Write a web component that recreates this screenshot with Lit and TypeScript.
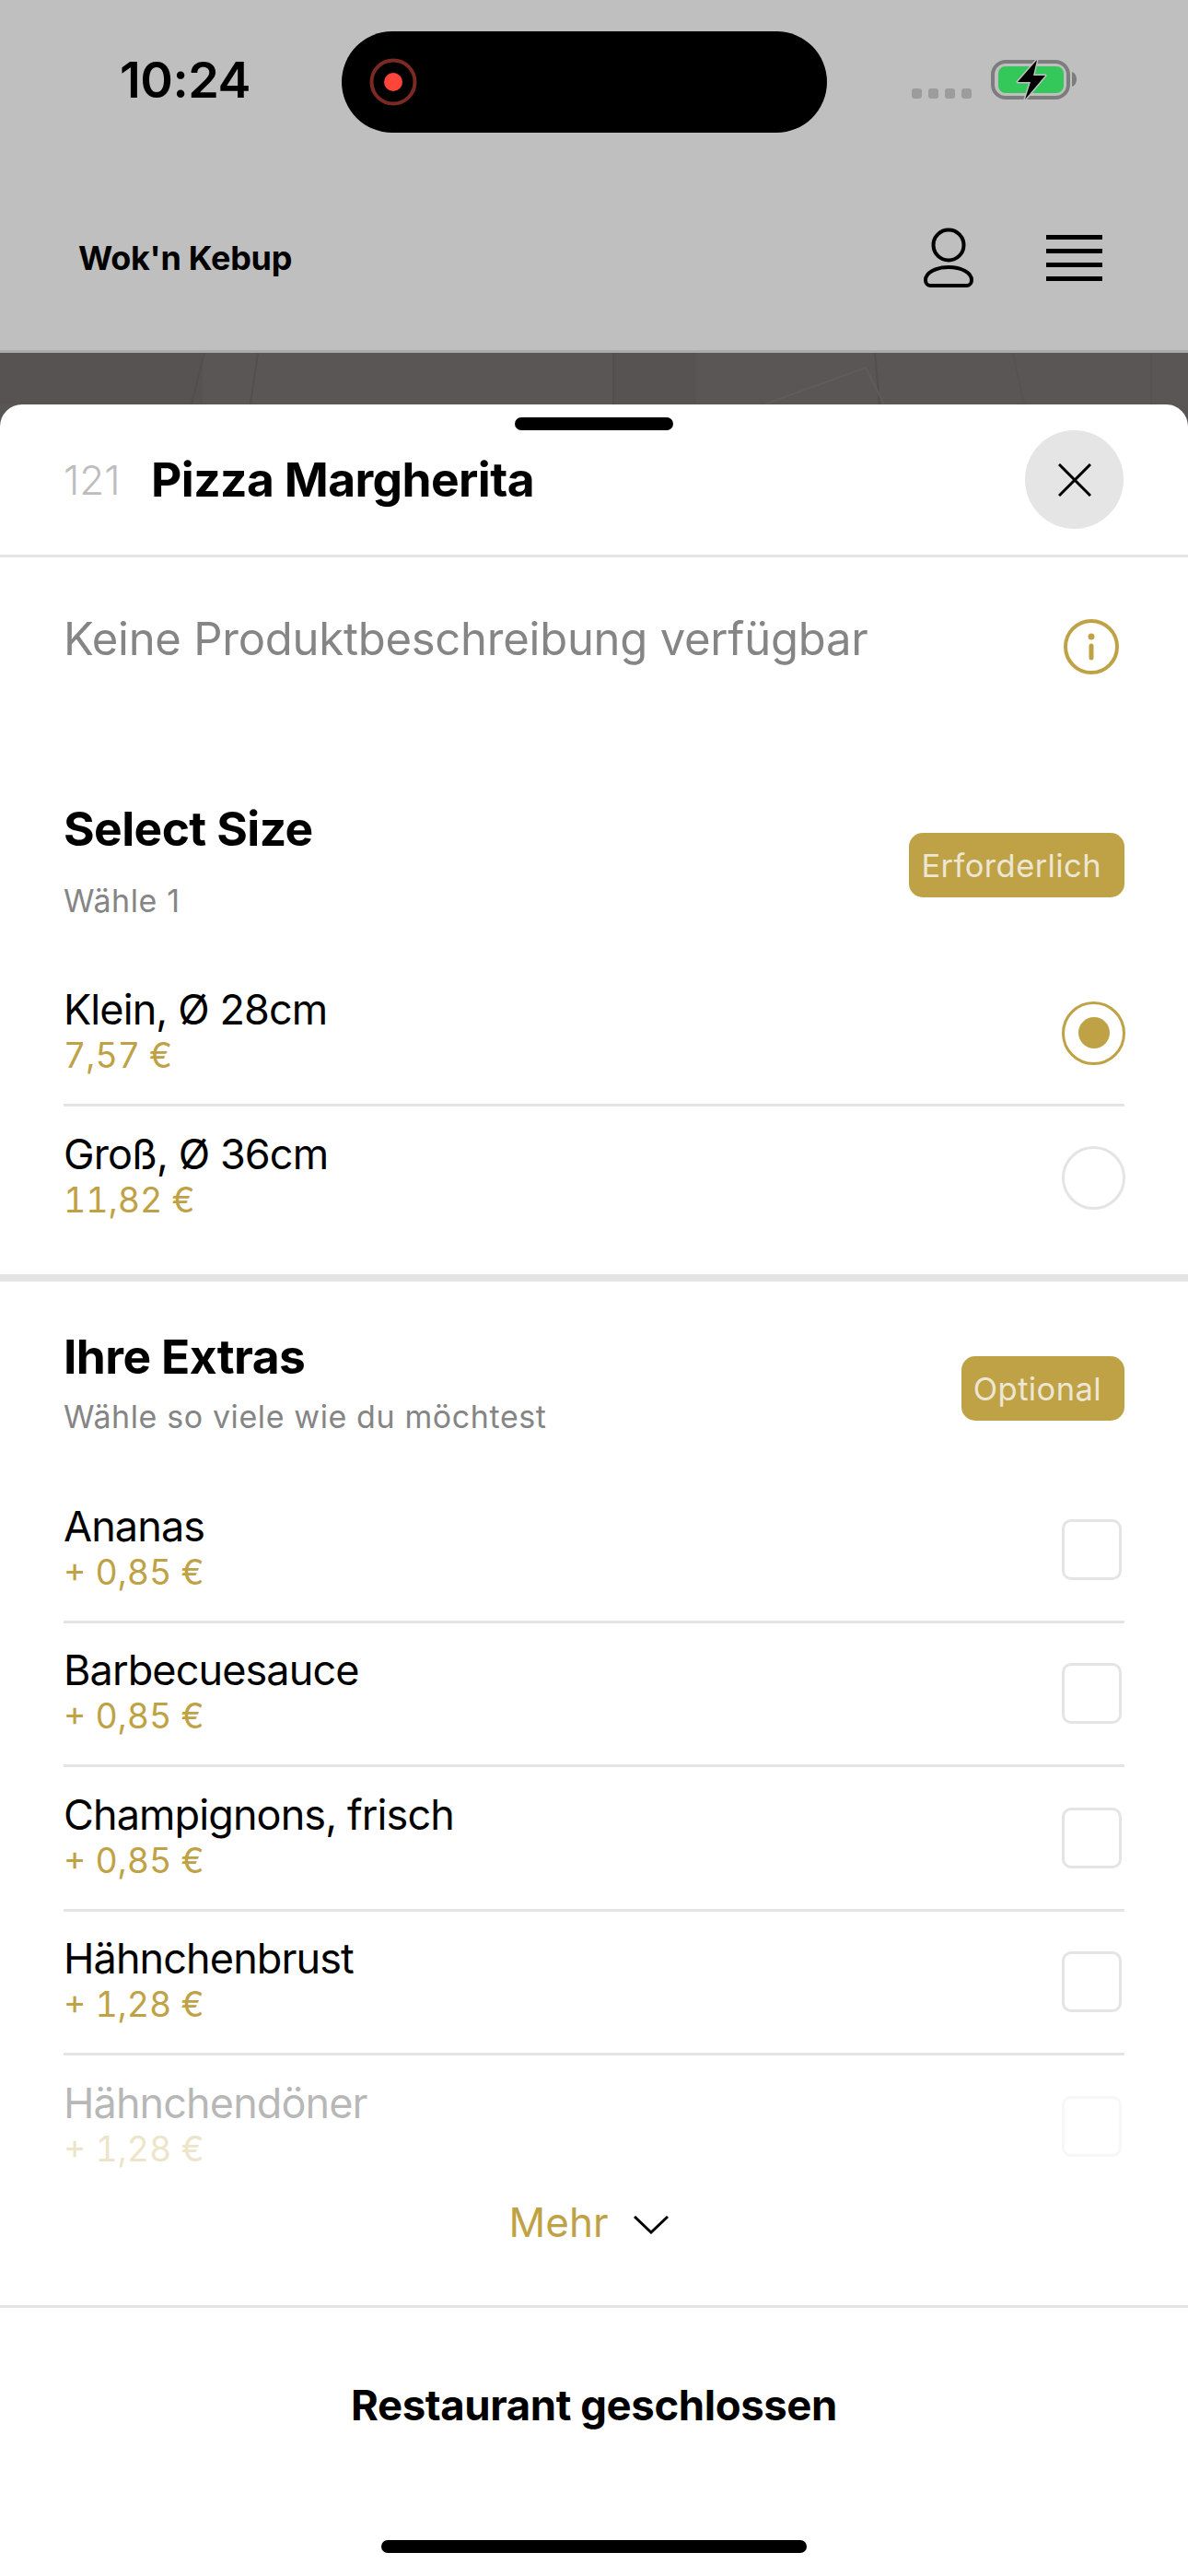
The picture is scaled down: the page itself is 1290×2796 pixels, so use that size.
import { LitElement, html, css } from "lit";
import { customElement } from "lit/decorators.js";

const extras = [
  ["Ananas", "+ 0,85 €"],
  ["Barbecuesauce", "+ 0,85 €"],
  ["Champignons, frisch", "+ 0,85 €"],
  ["Hähnchenbrust", "+ 1,28 €"],
  ["Hähnchendöner", "+ 1,28 €"],
];

@customElement("app-root")
export class AppRoot extends LitElement {
  static styles = css`
    :host { display: block; width: 1290px; height: 2796px; overflow: hidden; font-family: Inter, "Liberation Sans", sans-serif; color: #000; background: #fff; }
    .top { height: 380px; background: #bfbfbf; border-bottom: 3px solid #aaa; display: flex; flex-direction: column; }
    .status { display: flex; align-items: flex-start; height: 144px; padding-top: 34px; box-sizing: border-box; }
    .time { width: 371px; box-sizing: border-box; padding: 28px 0 0 130px; font-size: 54px; line-height: 50px; font-weight: 600; letter-spacing: -0.5px; }
    .island { width: 527px; height: 110px; border-radius: 55px; background: #000; display: flex; align-items: center; padding-left: 29px; box-sizing: border-box; }
    .dots { display: flex; gap: 7px; margin: 62px 0 0 92px; }
    .dots i { width: 11px; height: 11px; border-radius: 3px; background: #9c9c9c; display: block; }
    .batt { margin: 29px 0 0 21px; display: block; }
    .nav { display: flex; align-items: center; height: 236px; padding: 36px 93px 0 85px; box-sizing: border-box; }
    .brand { font-size: 36px; font-weight: 700; flex: 1; letter-spacing: -0.3px; }
    .user { margin-right: 79px; display: block; }
    .burger { display: flex; flex-direction: column; gap: 10px; width: 61px; }
    .burger i { display: block; height: 5px; background: #000; }
    .stage { background: #595555; height: 2413px; display: flex; flex-direction: column; }
    .wood { display: block; flex: none; height: 56px; width: 1290px; }
    .sheet { flex: 1; background: #fff; border-radius: 24px 24px 0 0; display: flex; flex-direction: column; min-height: 0; }
    .grab { width: 172px; height: 14px; border-radius: 7px; background: #000; margin: 14px auto 0; flex: none; }
    .head { display: flex; align-items: center; padding: 0 70px 28px 69px; border-bottom: 3px solid #e4e4e4; flex: none; height: 107px; }
    .num { font-size: 44px; font-weight: 300; color: #bdbdbd; width: 95px; }
    .title { font-size: 51.500px; font-weight: 700; flex: 1; letter-spacing: -0.6px; position: relative; top: -1px; }
    .close { width: 107px; height: 107px; border-radius: 50%; background: #e5e5e5; display: flex; align-items: center; justify-content: center; }
    .desc { display: flex; justify-content: space-between; padding: 59px 75px 0 69px; height: 228px; box-sizing: border-box; font-size: 49px; line-height: 60px; color: #858585; font-weight: 400; flex: none; letter-spacing: -0.25px; }
    .desc svg { margin-top: 8px; flex: none; }
    .sec { padding: 0 69px; flex: none; }
    .sechead { display: flex; justify-content: space-between; align-items: flex-start; }
    .h2 { font-size: 51.500px; line-height: 60px; font-weight: 700; letter-spacing: -0.6px; }
    .sub { font-size: 34px; line-height: 40px; color: #858585; letter-spacing: 0.6px; }
    .badge { background: #bfa246; color: #ece6d3; font-size: 34.500px; border-radius: 15px; padding: 0 25px 0 13px; display: flex; align-items: center; height: 70px; box-sizing: border-box; letter-spacing: 0.4px; }
    .size-head { height: 211px; padding-top: 36px; box-sizing: border-box; }
    .size-head .sub { margin-top: 29px; }
    .size-head .badge { margin-top: 35px; }
    .row { display: flex; align-items: center; justify-content: space-between; height: 157px; box-sizing: border-box; border-bottom: 3px solid #e4e4e4; }
    .row:last-child { border-bottom-color: transparent; }
    .name { font-size: 45px; line-height: 50px; letter-spacing: -0.9px; }
    .price { font-size: 37.500px; line-height: 50px; color: #bfa246; font-weight: 400; font-variant-numeric: tabular-nums; }
    .radio { width: 69px; height: 69px; border-radius: 50%; border: 3px solid #e4e4e4; box-sizing: border-box; display: flex; align-items: center; justify-content: center; margin-right: -1px; }
    .radio.on { border-color: #bfa246; }
    .radio.on i { width: 34px; height: 34px; border-radius: 50%; background: #bfa246; display: block; }
    .check { width: 65px; height: 66px; border-radius: 10px; border: 3px solid #e4e4e4; box-sizing: border-box; margin-right: 3px; }
    .divider { height: 8px; background: #e4e4e4; margin-top: 25px; flex: none; }
    .extra-head { height: 214px; padding-top: 51px; box-sizing: border-box; }
    .extra-head .sub { margin-top: 16px; }
    .extra-head .badge { margin-top: 30px; }
    .list { height: 750px; overflow: hidden; flex: none; }
    .list .row { height: 156.500px; }
    .row.fade { opacity: 0.28; }
    .more { height: 147px; flex: none; display: flex; align-items: flex-start; justify-content: center; gap: 28px; padding: 28px 11px 0 0; box-sizing: border-box; color: #bfa246; font-size: 44px; line-height: 58px; }
    .more svg { margin-top: 22px; }
    .foot { flex: 1; border-top: 3px solid #e4e4e4; display: flex; flex-direction: column; align-items: center; }
    .cta { font-size: 45.500px; line-height: 60px; font-weight: 700; margin-top: 76px; letter-spacing: -0.4px; }
    .home { width: 462px; height: 14px; border-radius: 7px; background: #000; margin-top: 116px; }
  `;

  render() {
    return html`
      <div class="top">
        <div class="status">
          <div class="time">10:24</div>
          <div class="island">
            <svg width="54" height="54" viewBox="0 0 54 54"><circle cx="27" cy="27" r="23.500" fill="none" stroke="#7a2a22" stroke-width="4"/><circle cx="27" cy="27" r="10" fill="#ff453a"/></svg>
          </div>
          <div class="dots"><i></i><i></i><i></i><i></i></div>
          <svg class="batt" width="96" height="46" viewBox="0 0 96 46">
            <rect x="2" y="4" width="82" height="39" rx="14" fill="none" stroke="#7d7d7d" stroke-width="4"/>
            <rect x="8" y="9" width="71" height="29" rx="8" fill="#34c759"/>
            <path d="M88 15c3 1 5 4 5 8s-2 7-5 8z" fill="#7d7d7d"/>
            <path d="M50 2 29 26h14l-6 19 22-26H46z" fill="#000" stroke="#bfbfbf" stroke-width="3" paint-order="stroke" stroke-linejoin="round"/>
          </svg>
        </div>
        <div class="nav">
          <div class="brand">Wok'n Kebup</div>
          <svg class="user" width="54" height="66" viewBox="0 0 54 66" fill="none" stroke="#000" stroke-width="4">
            <circle cx="27" cy="19" r="16.500"/>
            <path d="M27 43c-14 0-25 6-25 14 0 3 2 6 5 6h40c3 0 5-3 5-6 0-8-11-14-25-14z"/>
          </svg>
          <div class="burger"><i></i><i></i><i></i><i></i></div>
        </div>
      </div>
      <div class="stage">
        <svg class="wood" viewBox="0 0 1290 56" preserveAspectRatio="none" fill="none">
          <rect width="1290" height="56" fill="#5a5656"/>
          <rect width="220" height="56" fill="#575353"/>
          <rect x="666" width="90" height="56" fill="#575353"/>
          <path d="M222 0 208 56M280 0 272 56M666 0V56M950 0 955 56" stroke="#4f4b4b" stroke-width="2" opacity=".6"/>
          <path d="M830 56 940 16l20 40" stroke="#646060" stroke-width="2" opacity=".7"/>
          <path d="M1250 0V56M1100 0 1112 56" stroke="#525050" stroke-width="2" opacity=".5"/>
        </svg>
        <div class="sheet">
          <div class="grab"></div>
          <div class="head">
            <div class="num">121</div>
            <div class="title">Pizza Margherita</div>
            <div class="close"><svg width="36" height="36" viewBox="0 0 36 36"><path d="M1 1 35 35M35 1 1 35" stroke="#000" stroke-width="3" fill="none"/></svg></div>
          </div>
          <div class="desc">
            <span>Keine Produktbeschreibung verfügbar</span>
            <svg width="60" height="60" viewBox="0 0 60 60" fill="none"><circle cx="30" cy="30" r="28" stroke="#bfa246" stroke-width="4"/><circle cx="30" cy="19" r="3.500" fill="#bfa246"/><path d="M30 29v13" stroke="#bfa246" stroke-width="5" stroke-linecap="round"/></svg>
          </div>
          <div class="sec size-head sechead">
            <div><div class="h2">Select Size</div><div class="sub">Wähle 1</div></div>
            <div class="badge">Erforderlich</div>
          </div>
          <div class="sec">
            <div class="row"><div><div class="name">Klein, Ø 28cm</div><div class="price">7,57 €</div></div><div class="radio on"><i></i></div></div>
            <div class="row"><div><div class="name">Groß, Ø 36cm</div><div class="price">11,82 €</div></div><div class="radio"></div></div>
          </div>
          <div class="divider"></div>
          <div class="sec extra-head sechead">
            <div><div class="h2">Ihre Extras</div><div class="sub">Wähle so viele wie du möchtest</div></div>
            <div class="badge">Optional</div>
          </div>
          <div class="sec list">
            ${extras.map((e, i) => html`<div class="row ${i === 4 ? "fade" : ""}"><div><div class="name">${e[0]}</div><div class="price">${e[1]}</div></div><div class="check"></div></div>`)}
          </div>
          <div class="more">
            <span>Mehr</span>
            <svg width="38" height="20" viewBox="0 0 38 20"><path d="M1 1 19 18 37 1" fill="none" stroke="#000" stroke-width="3"/></svg>
          </div>
          <div class="foot">
            <div class="cta">Restaurant geschlossen</div>
            <div class="home"></div>
          </div>
        </div>
      </div>
    `;
  }
}
